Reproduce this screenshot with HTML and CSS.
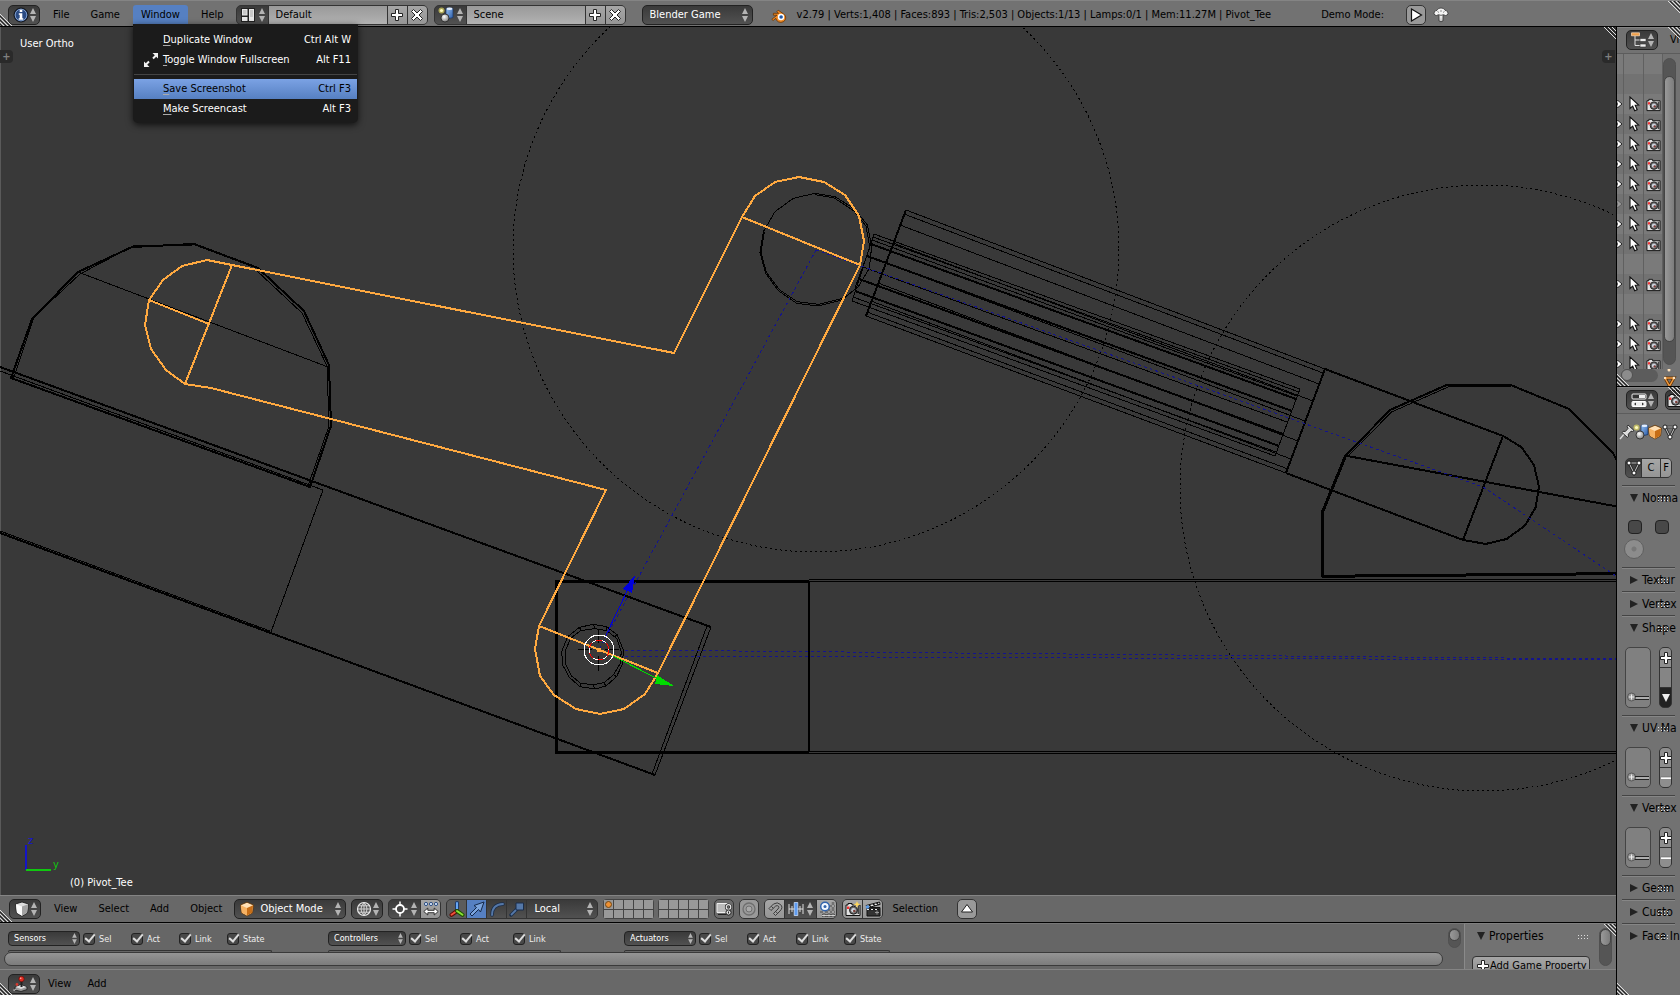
FILE: index.html
```html
<!DOCTYPE html>
<html lang="en">
<head>
<meta charset="utf-8">
<title>Blender</title>
<link rel="stylesheet" href="styles.css">
</head>
<body>
<svg class="defs" aria-hidden="true">
  <defs>
    <linearGradient id="gBlue" x1="0" y1="0" x2="1" y2="1"><stop offset="0" stop-color="#9cc4f4"/><stop offset="1" stop-color="#2a5ca8"/></linearGradient>
    <radialGradient id="gBall" cx=".4" cy=".35" r=".7"><stop offset="0" stop-color="#fff"/><stop offset="1" stop-color="#777"/></radialGradient>
    <linearGradient id="gWhite" x1="0" y1="0" x2="0" y2="1"><stop offset="0" stop-color="#fff"/><stop offset="1" stop-color="#bbb"/></linearGradient>
    <symbol id="arrows" viewBox="0 0 6 14"><path d="M3 0 6 6H0zM3 14 6 8H0z" fill="#b4b4b4"/></symbol>
    <symbol id="info" viewBox="0 0 16 16"><circle cx="8" cy="8" r="7" fill="#2b4b83" stroke="#111"/><circle cx="8" cy="8" r="5.8" fill="none" stroke="#7f9cc9"/><path d="M6.7 2.7h2.6v2.2H6.7zM5.8 6.2h3.5v5h1v1.6H5.7v-1.6h1V7.8h-.9z" fill="#fff"/></symbol>
    <symbol id="layout" viewBox="0 0 16 16"><path d="M1 1h14v14H1z" fill="#222"/><path d="M2 2h5.5v6.500H2zM2 10h5.500v4H2zM9 2h5v12H9z" fill="#e8e8e8"/><path d="M3 3h3.500v4.500H3zM10 3h3v7h-3z" fill="#c8c8c8"/></symbol>
    <symbol id="scene" viewBox="0 0 16 16"><path d="M8 1.500Q11.500 0 15 1.500v9q-3.500 1.800-7 0z" fill="url(#gBlue)" stroke="#183461" stroke-width=".7"/><ellipse cx="11.500" cy="1.800" rx="3" ry="1.200" fill="#e4efff"/><circle cx="7" cy="11" r="4" fill="url(#gBall)" stroke="#222" stroke-width=".8"/><circle cx="3.500" cy="3.500" r="3" fill="#e7df62" opacity=".65"/><circle cx="3.500" cy="3.500" r="1.600" fill="#fffbc0"/></symbol>
    <symbol id="plus" viewBox="0 0 14 14"><path d="M5.500 1.500h3v4h4v3h-4v4h-3v-4h-4v-3h4z" fill="#fff" stroke="#222"/></symbol>
    <symbol id="minus" viewBox="0 0 14 14"><path d="M1.500 6h11v2.500h-11z" fill="#fff" stroke="#666" stroke-width=".6"/></symbol>
    <symbol id="cross" viewBox="0 0 14 14"><path d="M3.500 1.500 7 5l3.500-3.500 2 2L9 7l3.500 3.500-2 2L7 9l-3.500 3.500-2-2L5 7 1.500 3.500z" fill="#fff" stroke="#222"/></symbol>
    <symbol id="blender" viewBox="0 0 16 16"><path d="M.8 12.300 6 8.200H2.400V6.300h5.200L5.800 4.700 7.200 3.200l5.600 3.900a5 4.600 0 1 1-8 4.200l-2.700 2.200z" fill="#f08a24" stroke="#6b3300" stroke-width=".8"/><circle cx="10" cy="10" r="3.200" fill="#fff"/><circle cx="10.100" cy="10" r="1.800" fill="#2358a5"/></symbol>
    <symbol id="play" viewBox="0 0 14 14"><path d="M2.500 1 12.500 7 2.500 13z" fill="#fff" stroke="#111" stroke-width="1.200"/></symbol>
    <symbol id="bomb" viewBox="0 0 16 16"><path d="M6 7.500h4V14q-2 1.500-4 0z" fill="url(#gWhite)" stroke="#333" stroke-width=".8"/><path d="M1 6.500Q.8 3.500 4 3.300 5 .8 8 1q3-.2 4 2.300 3.200.2 3 3.200-.2 2-2.500 2l-2-.8q-2.500 1.300-5 0l-2 .8Q1.200 8.500 1 6.500z" fill="#f4f4f4" stroke="#333" stroke-width=".8"/><path d="M4.500 4.500l1.500 1M8 3v2M11.500 4.500l-1.500 1" stroke="#888"/></symbol>
    <symbol id="fullscreen" viewBox="0 0 16 16"><path d="M9.500 1H15v5.500l-1.800-1.800-2.500 2.500-1.400-1.400 2.500-2.500zM6.500 15H1V9.500l1.800 1.800 2.500-2.500 1.400 1.400-2.500 2.500z" fill="#f2f2f2"/></symbol>
    <symbol id="cubeWhite" viewBox="0 0 16 16"><path d="M8 1 14.500 3 13.500 12 8 15.300 2.500 12 1.500 3z" fill="#ddd" stroke="#111" stroke-width=".8"/><path d="M1.900 3.300 8 5.500V14.800L2.900 11.800z" fill="#fafafa"/><path d="M14.100 3.300 8 5.500V14.800L13.100 11.800z" fill="#a2a2a2"/></symbol>
    <symbol id="cubeOrange" viewBox="0 0 16 16"><path d="M8 1.200 14.500 4 13.500 12 8 15 2.500 12 1.500 4z" fill="#ffe0b5" stroke="#5c2e00" stroke-width=".8"/><path d="M1.900 4.300 8 7V14.500L2.800 11.800z" fill="#f6b263"/><path d="M14.100 4.300 8 7V14.500L13.200 11.800z" fill="#c66d16"/></symbol>
    <symbol id="globe" viewBox="0 0 16 16"><circle cx="8" cy="8" r="6.500" fill="#555" stroke="#eee" stroke-width="1.200"/><path d="M8 1.500v13M1.500 8h13M8 1.500Q2 8 8 14.500Q14 8 8 1.500M2.800 4.800h10.400M2.800 11.200h10.400" fill="none" stroke="#ddd" stroke-width=".9"/></symbol>
    <symbol id="pivot" viewBox="0 0 16 16"><circle cx="8" cy="8" r="4" fill="none" stroke="#fff" stroke-width="1.800"/><path d="M8 .5v4M8 11.500v4M.5 8h4M11.500 8h4" stroke="#fff" stroke-width="1.500"/></symbol>
    <symbol id="centers" viewBox="0 0 16 16"><g fill="#d6e6ff" stroke="#23467c" stroke-width=".9"><circle cx="3" cy="3" r="1.600"/><circle cx="8" cy="3" r="1.600"/><circle cx="13" cy="3" r="1.600"/></g><path d="M.8 10.500 4.800 7v2.300h6.400V7l4 3.500-4 3.500v-2.300H4.800V14z" fill="#fff" stroke="#222" stroke-width=".9"/></symbol>
    <symbol id="axes" viewBox="0 0 16 16"><path d="M8 9.500V2" stroke="#1c3d70" stroke-width="4" stroke-linecap="round"/><path d="M8 9.500V2" stroke="#67a6f5" stroke-width="2" stroke-linecap="round"/><path d="M8 10 2.500 13.800" stroke="#5e0b05" stroke-width="4" stroke-linecap="round"/><path d="M8 10 2.500 13.800" stroke="#f0523c" stroke-width="2" stroke-linecap="round"/><path d="M8 10l5.500 3.800" stroke="#1f5200" stroke-width="4" stroke-linecap="round"/><path d="M8 10l5.500 3.800" stroke="#8ae234" stroke-width="2" stroke-linecap="round"/></symbol>
    <symbol id="translate" viewBox="0 0 16 16"><path d="M1 13 7.500 6.500 5 4.500 15 1 11.500 11 9.500 8.500 3 15z" fill="#7ba4dd" stroke="#14284a"/></symbol>
    <symbol id="rotate" viewBox="0 0 16 16"><path d="M3 14Q3 3.500 14 3" fill="none" stroke="#1a2d4a" stroke-width="3.400" stroke-linecap="round"/><path d="M3 14Q3 3.500 14 3" fill="none" stroke="#5578a8" stroke-width="1.800" stroke-linecap="round"/></symbol>
    <symbol id="scale" viewBox="0 0 16 16"><path d="M2 14 8 8" stroke="#1a2d4a" stroke-width="3.400" stroke-linecap="round"/><path d="M2 14 8 8" stroke="#5578a8" stroke-width="1.800"/><path d="M7 2h7.500v7H7z" fill="#5578a8" stroke="#1a2d4a"/></symbol>
    <symbol id="lock" viewBox="0 0 16 16"><path d="M1 2.500h10v9H1z" fill="#bbb" stroke="#eee"/><path d="M2 13.500h9" stroke="#222"/><circle cx="12.500" cy="6" r="2.300" fill="none" stroke="#222" stroke-width="2.600"/><circle cx="12.500" cy="6" r="2.300" fill="none" stroke="#e8e8e8" stroke-width="1.200"/><circle cx="12.500" cy="11.500" r="2.600" fill="#ddd" stroke="#222"/><path d="M12.500 10.500v2" stroke="#222"/></symbol>
    <symbol id="propedit" viewBox="0 0 16 16"><circle cx="8" cy="8" r="6" fill="none" stroke="#6f6f6f" stroke-width="1.300"/><circle cx="8" cy="8" r="3" fill="#a9a9a9" stroke="#6f6f6f"/></symbol>
    <symbol id="magnet" viewBox="0 0 16 16"><path d="M2 7.500 6.500 3Q10.500.5 13.500 3.500T13 10l-4.500 4.500-2-2L11 8q1.500-1.800.5-2.800T8.700 5L4 9.500z" fill="#a2a2a2" stroke="#3c3c3c"/><path d="M4.300 5.300l2 2M10.500 12.300l-2-2" stroke="#3c3c3c"/></symbol>
    <symbol id="increment" viewBox="0 0 16 16"><path d="M1 3v10M15 3v10M4 5v6M12 5v6M1 8h14" stroke="#ddd"/><path d="M6.200 1.500h3.600v13H6.200z" fill="#5f9cf0" stroke="#d8e8ff" stroke-width=".7"/></symbol>
    <symbol id="snapgrid" viewBox="0 0 16 16"><path d="M5 9v7M10 8v8M14 1v15M9 5h7M1 11h15M3 14.500h13" stroke="#1b1b1b" stroke-width="2.200"/><path d="M5 9v7M10 8v8M14 1v15M9 5h7M1 11h15M3 14.500h13" stroke="#ddd" stroke-width=".9"/><circle cx="6" cy="5.500" r="4.300" fill="#f2f7ff" stroke="#3264ad" stroke-width="1.500"/><circle cx="6" cy="5.500" r="1.500" fill="#3264ad"/></symbol>
    <symbol id="camera" viewBox="0 0 16 16"><path d="M1 4h2V2.500h4V4h8v10.500H1z" fill="#e2e2e2" stroke="#111"/><path d="M2 5.500h2.500V8H2z" fill="#e33"/><path d="M12.500 5h1.800v8h-1.800z" fill="#444"/><circle cx="8.500" cy="9.200" r="4" fill="#666" stroke="#222"/><circle cx="8.500" cy="9.200" r="2.300" fill="#cfd5df"/><circle cx="9.300" cy="10" r="1.300" fill="#7c3f39"/></symbol>
    <symbol id="renderStill" viewBox="0 0 16 16"><use href="#camera"/><path d="M12 0l1 2.500 2.800.8-2.800 1L12 7l-1-2.700-2.800-1L11 2.500z" fill="#ffd75c"/></symbol>
    <symbol id="clapper" viewBox="0 0 16 16"><path d="M2 6.500h13V15H2z" fill="#333" stroke="#111"/><path d="M1.200 4.500 14.500 1l.6 2.400L2 7z" fill="#eee" stroke="#111"/><path d="M4 4l2 1.800M8 2.900l2 1.800M11.500 2l2 1.700M3 8.500h11" stroke="#111" stroke-width="1.400"/><path d="M2 8.500h2M6 8.500h2M10 8.500h2" stroke="#eee"/><path d="M10 11.500h4M12 9.500v4" stroke="#999"/><circle cx="2.500" cy="6" r="1.800" fill="#5a9be8"/></symbol>
    <symbol id="upTri" viewBox="0 0 14 14"><path d="M7 2.500 12.500 10H1.500z" fill="#fff" stroke="#222"/></symbol>
    <symbol id="joystick" viewBox="0 0 16 16"><path d="M2 11 8 8.500l6 2.500v2.500L8 15.500 2 14z" fill="#999" stroke="#1a1a1a" stroke-width=".8"/><path d="M2.500 11 8 9l5.500 2L8 13z" fill="#ddd"/><path d="M8.500 4v7" stroke="#222" stroke-width="2"/><circle cx="8.500" cy="3" r="2.700" fill="#e02c22" stroke="#5d0703" stroke-width=".6"/><circle cx="7.700" cy="2.300" r=".8" fill="#ffb4ac"/><circle cx="4" cy="8.500" r="1.400" fill="#d43a30"/><path d="M2.500 13Q1 15.500.5 14" fill="none" stroke="#eee"/></symbol>
    <symbol id="tree" viewBox="0 0 16 16"><path d="M4 4v9.500h5M4 8h5" fill="none" stroke="#ddd"/><path d="M.5.800h8v3h-8z" fill="#f0a04a" stroke="#fbe0c0" stroke-width=".7"/><path d="M9 6.500h6v3H9zM9 12h6v3H9z" fill="#eee" stroke="#333" stroke-width=".6"/></symbol>
    <symbol id="props" viewBox="0 0 16 16"><rect x="1" y="2" width="14" height="5" rx="1" fill="#333" stroke="#eee"/><path d="M8 3h6v3H8z" fill="#eee"/><rect x="1" y="9.500" width="14" height="5" rx="1" fill="#eee" stroke="#fff"/><path d="M5 10.500 3 12l2 1.500zM11 10.500l2 1.500-2 1.500z" fill="#333"/></symbol>
    <symbol id="pin" viewBox="0 0 16 16"><path d="M1 15 6 9" stroke="#ddd" stroke-width="1.400"/><path d="M9 1l6 5.500-1.500 1-1.500-.3-2.700 3 .2 2.300-1.200.8L3 8.500l1-1.200 2.300.2 2.700-3L8.200 2.500z" fill="#ddd" stroke="#222" stroke-width=".9"/></symbol>
    <symbol id="mesh" viewBox="0 0 16 16"><path d="M3 3h10L8 13z" fill="none" stroke="#222" stroke-width="2.600"/><path d="M3 3h10L8 13z" fill="none" stroke="#ccc"/><g fill="#fff" stroke="#111" stroke-width=".9"><circle cx="3" cy="3" r="2"/><circle cx="13" cy="3" r="2"/><circle cx="8" cy="13" r="2"/></g></symbol>
    <symbol id="cursor" viewBox="0 0 12 16"><path d="M2 1v11.500l2.700-2.300 2 4.600 2.500-1.100-2-4.400 3.500-.3z" fill="#fff" stroke="#111" stroke-width="1.100"/></symbol>
    <symbol id="eye" viewBox="0 0 6 10"><path d="M-3 1Q2 1 5 5 2 9-3 9z" fill="#fff" stroke="#222"/><path d="M0 3.500v3" stroke="#222" stroke-width="1.500"/></symbol>
    <symbol id="hatchR" viewBox="0 0 12 12"><path d="M0 0l12 12M4 0l8 8M8 0l4 4" stroke="#ddd"/><path d="M2 0l10 10M6 0l6 6M10 0l2 2" stroke="#222"/></symbol>
    <symbol id="hatchL" viewBox="0 0 12 12"><path d="M0 0l12 12M0 4l8 8M0 8l4 4" stroke="#ddd"/><path d="M0 2l10 10M0 6l6 6M0 10l2 2" stroke="#222"/></symbol>
    <symbol id="dots" viewBox="0 0 10 6"><path d="M0 1.500h10M0 4.500h10" stroke="#ddd" stroke-dasharray="1 2"/></symbol>
    <symbol id="filter" viewBox="0 0 26 12"><circle cx="4.500" cy="5" r="4" fill="#999" stroke="#555"/><path d="M2 5h5M4.500 2.500v5" stroke="#eee"/><path d="M8 4.500h14M8 7.500h14" stroke="#222"/><path d="M9 6h13" stroke="#ddd"/></symbol>
    <symbol id="triDown" viewBox="0 0 8 8"><path d="M0 0h8L4 8z" fill="#222"/></symbol>
    <symbol id="triRight" viewBox="0 0 8 8"><path d="M0 0 8 4 0 8z" fill="#222"/></symbol>
  </defs>
</svg>

<header class="bar bar-top">
  <svg class="hatch bl"><use href="#hatchL"/></svg>
  <button class="editor" aria-label="Editor type: Info"><svg class="ic"><use href="#info"/></svg><svg class="ar"><use href="#arrows"/></svg></button>
  <nav class="menus">
    <button class="menu">File</button>
    <button class="menu">Game</button>
    <div class="menu-wrap">
      <button class="menu open" aria-expanded="true">Window</button>
      <div class="popup" role="menu">
        <button class="item" role="menuitem"><span class="slot"></span><span class="lbl"><u>D</u>uplicate Window</span><span>Ctrl Alt W</span></button>
        <button class="item" role="menuitem"><span class="slot"><svg class="ic"><use href="#fullscreen"/></svg></span><span class="lbl"><u>T</u>oggle Window Fullscreen</span><span>Alt F11</span></button>
        <hr>
        <button class="item active-item" role="menuitem"><span class="slot"></span><span class="lbl"><u>S</u>ave Screenshot</span><span>Ctrl F3</span></button>
        <button class="item" role="menuitem"><span class="slot"></span><span class="lbl"><u>M</u>ake Screencast</span><span>Alt F3</span></button>
      </div>
    </div>
    <button class="menu">Help</button>
  </nav>
  <div class="group idblock">
    <button class="seg dark wide" aria-label="Browse screen layout"><svg class="ic"><use href="#layout"/></svg><svg class="ar"><use href="#arrows"/></svg></button>
    <input class="field" type="text" value="Default" aria-label="Screen layout">
    <button class="seg" aria-label="Add layout"><svg class="ic14"><use href="#plus"/></svg></button>
    <button class="seg" aria-label="Delete layout"><svg class="ic14"><use href="#cross"/></svg></button>
  </div>
  <div class="group idblock">
    <button class="seg dark wide" aria-label="Browse scene"><svg class="ic"><use href="#scene"/></svg><svg class="ar"><use href="#arrows"/></svg></button>
    <input class="field" type="text" value="Scene" aria-label="Scene">
    <button class="seg" aria-label="Add scene"><svg class="ic14"><use href="#plus"/></svg></button>
    <button class="seg" aria-label="Delete scene"><svg class="ic14"><use href="#cross"/></svg></button>
  </div>
  <div class="drop engine"><select aria-label="Render engine"><option>Blender Game</option></select><svg class="ar"><use href="#arrows"/></svg></div>
  <svg class="ic logo"><use href="#blender"/></svg>
  <p class="stats">v2.79 | Verts:1,408 | Faces:893 | Tris:2,503 | Objects:1/13 | Lamps:0/1 | Mem:11.27M | Pivot_Tee</p>
  <p class="demo">Demo Mode:</p>
  <button class="sq" aria-label="Play"><svg class="ic14"><use href="#play"/></svg></button>
  <svg class="ic bomb"><use href="#bomb"/></svg>
  <svg class="hatch tr"><use href="#hatchR"/></svg>
</header>

<div class="work">
  <main class="left">
    <section class="view3d">
      <svg class="scene" viewBox="0 27 1616 868" preserveAspectRatio="xMinYMin slice" aria-label="Wireframe view">
        <g class="wire dotted">
          <circle cx="816" cy="249" r="303"/><circle cx="1483" cy="488" r="303"/>
        </g>
        <g class="wire">
          <path class="w2" d="M11 378 32 319 78 272 132 247 194 244 258 268 304 311 329 365 331 426 310 487z"/>
          <path d="M13 380 34 317 80 274 133 246 193 245 M256 270 302 313 327 366 329 426 308 486"/>
          <path d="M78 272 328 367"/>
          <path class="w2" d="M0 367 711 627M0 533 655 775"/>
          <path d="M0 371 323 490 271 632M711 627 655 775M707 626 652 774M0 531 270 631"/>
          <path class="w3" d="M809 581H556V752H809"/><path class="w2" d="M809 581V752"/>
          <path d="M809 579.500H1616M809 581.500H1616M809 751.500H1616M809 753.500H1616"/>
        </g>
        <g class="wire">
          <path class="w2" d="M906 210 866 316M1325 369 1286 473"/>
          <path d="M906 210 1325 369M904 214 1323 373M900 225 1319 384M893 243 1313 401M886 263 1305 421M878 283 1298 441M871 301 1291 459M867 312 1288 469M866 316 1286 473"/>
          <path d="M874 234 852 301M1300 389 1275 456M870 247 855 288M874 234 1300 389M873 237 1299 392M852 301 1275 456M853 297 1276 452M872 240 1297 396"/>
          <path class="w2" d="M871 244 1296 399M867 256 1292 411M859 279 1283 434M855 291 1279 446"/>
          <path d="M863 267 1287 422"/>
          <path class="w2" d="M1325 369 1503 436M1286 473 1463 540M1503 436 1463 540"/>
        </g>
        <g class="wire" transform="translate(1240 350) scale(.3333)">
          <path class="w2" d="M788 257 845 292 882 345 897 410 887 472 855 527 800 567 737 582 670 570"/>
          <path class="w3" d="M248 680V485L317 317"/>
          <path class="w2" d="M317 317 450 180 620 105H812L985 176"/>
          <path d="M322 320 455 186 624 111H812"/>
          <path class="w2" d="M985 176 1120 310 1132 335M317 317 1128 469"/>
          <path class="w3" d="M247 679 1128 671"/>
        </g>
        <g class="wire" transform="translate(720 160) scale(.3333)">
          <path d="M285 100 345 110 405 148 442 195 455 260 448 325 415 380 365 420 295 438 230 430 175 392 137 340 120 278 130 215 165 155 220 115z"/>
          <path d="M285 104 343 114 402 153 438 198 449 260M365 416 295 433 232 425 178 389 139 337 123 278 133 215"/>
        </g>
        <g class="wire" transform="translate(500 560) scale(.3333)">
          <path d="M280 193 320 200 352 225 370 270 368 310 350 350 318 378 285 387 240 380 208 352 188 315 185 275 203 230 238 202zM285 206 320 212 350 235 364 275 360 312 340 345 312 368 280 374 242 370 215 348 197 312 195 275 212 235 242 212zM238 202l6 10M280 193l5 13M320 200v12M352 225l-10 6M203 230l10 6M318 378l-6-10M350 350l-10-6M285 387l-5-12M240 380l4-10"/>
        </g>
        <g class="rel">
          <path d="M816 250 599 650M816 250 1483 487 1616 576M625 650 1616 659M625 656 1616 660"/>
        </g>
        <g class="active">
          <path d="M185 384 166 370 151 349 145 325 149 300 163 280 182 266 207 260 232 265 674 353 742 217 755 196 775 182 799 177 824 182 845 195 859 216 864 241 860 265 658 673 645 694 624 709 600 714 576 709 554 695 540 676 535 649 539 626 606 490 211 388z"/>
          <path d="M149 300 209 324M232 265 185 384M742 217 860 265M539 626 658 673"/>
        </g>
        <path class="zaxis" d="M606 635 630 585"/><path class="zhead" d="M635 575 623 589 632 593z"/>
        <path class="yaxis" d="M613 656 658 679"/><path class="yhead" d="M674 686 657 675 655 684z"/>
        <path class="wire cross" d="M578 649.500h14M605 649.500h14M598.500 629v14M598.500 656v15"/>
        <circle class="cur-w" cx="599" cy="650" r="15"/><circle class="cur-w" cx="599" cy="650" r="10"/><circle class="cur-r" cx="599" cy="650" r="10"/><circle cx="599" cy="650" r="2.500" fill="#ffa940"/>
        <path d="M26 870V845" stroke="#1414c8" stroke-width="2"/><path d="M26 870h25" stroke="#0fc80f" stroke-width="2"/>
        <text x="28" y="844" fill="#1414d2">z</text><text x="53" y="868" fill="#0fc80f">y</text>
        <text x="70" y="886" fill="#fff">(0) Pivot_Tee</text>
      </svg>
      <p class="overlay">User Ortho</p>
      <button class="tab tab-l" aria-label="Show tools">+</button>
      <button class="tab tab-r" aria-label="Show properties">+</button>
      <svg class="hatch tr"><use href="#hatchR"/></svg>
    </section>

    <div class="bar bar-view">
      <svg class="hatch bl"><use href="#hatchL"/></svg>
      <button class="editor" aria-label="Editor type: 3D View"><svg class="ic"><use href="#cubeWhite"/></svg><svg class="ar"><use href="#arrows"/></svg></button>
      <nav class="menus">
        <button class="menu">View</button><button class="menu">Select</button><button class="menu">Add</button><button class="menu">Object</button>
      </nav>
      <div class="drop mode"><svg class="ic"><use href="#cubeOrange"/></svg><select aria-label="Mode"><option>Object Mode</option></select><svg class="ar"><use href="#arrows"/></svg></div>
      <button class="editor near" aria-label="Viewport shading"><svg class="ic"><use href="#globe"/></svg><svg class="ar"><use href="#arrows"/></svg></button>
      <div class="group">
        <button class="seg dark wide" aria-label="Pivot point"><svg class="ic"><use href="#pivot"/></svg><svg class="ar"><use href="#arrows"/></svg></button>
        <button class="seg" aria-label="Manipulate centers"><svg class="ic"><use href="#centers"/></svg></button>
      </div>
      <div class="group">
        <button class="seg mid" aria-label="Manipulator"><svg class="ic"><use href="#axes"/></svg></button>
        <button class="seg blue" aria-label="Translate"><svg class="ic"><use href="#translate"/></svg></button>
        <button class="seg dark" aria-label="Rotate"><svg class="ic"><use href="#rotate"/></svg></button>
        <button class="seg dark" aria-label="Scale"><svg class="ic"><use href="#scale"/></svg></button>
        <div class="drop orient"><select aria-label="Orientation"><option>Local</option></select><svg class="ar"><use href="#arrows"/></svg></div>
      </div>
      <div class="layers">
        <button aria-label="Layer 1"><i class="dot"></i></button><button aria-label="Layer 2"></button><button aria-label="Layer 3"></button><button aria-label="Layer 4"></button><button aria-label="Layer 5"></button>
        <button aria-label="Layer 11"></button><button aria-label="Layer 12"></button><button aria-label="Layer 13"></button><button aria-label="Layer 14"></button><button aria-label="Layer 15"></button>
      </div>
      <div class="layers">
        <button aria-label="Layer 6"></button><button aria-label="Layer 7"></button><button aria-label="Layer 8"></button><button aria-label="Layer 9"></button><button aria-label="Layer 10"></button>
        <button aria-label="Layer 16"></button><button aria-label="Layer 17"></button><button aria-label="Layer 18"></button><button aria-label="Layer 19"></button><button aria-label="Layer 20"></button>
      </div>
      <button class="sq pressed" aria-label="Lock to scene"><svg class="ic"><use href="#lock"/></svg></button>
      <button class="sq" aria-label="Proportional editing"><svg class="ic"><use href="#propedit"/></svg></button>
      <div class="group">
        <button class="seg" aria-label="Snap"><svg class="ic"><use href="#magnet"/></svg></button>
        <button class="seg dark wide" aria-label="Snap element"><svg class="ic"><use href="#increment"/></svg><svg class="ar"><use href="#arrows"/></svg></button>
        <button class="seg" aria-label="Absolute grid snap"><svg class="ic"><use href="#snapgrid"/></svg></button>
      </div>
      <div class="group">
        <button class="seg" aria-label="OpenGL render"><svg class="ic"><use href="#renderStill"/></svg></button>
        <button class="seg" aria-label="OpenGL render animation"><svg class="ic"><use href="#clapper"/></svg></button>
      </div>
      <p class="selection">Selection</p>
      <button class="sq" aria-label="Up"><svg class="ic14"><use href="#upTri"/></svg></button>
    </div>

    <section class="logic">
      <div class="bricks">
        <div class="brick-cols">
          <div class="bcol bc-sensors">
            <div class="brow"><div class="drop small"><select aria-label="Sensors"><option>Sensors</option></select><svg class="ar"><use href="#arrows"/></svg></div>
            <label><input type="checkbox" checked>Sel</label><label class="c2"><input type="checkbox" checked>Act</label><label class="c3"><input type="checkbox" checked>Link</label><label><input type="checkbox" checked>State</label></div>
            <div class="stub"></div>
          </div>
          <div class="bcol bc-controllers">
            <div class="brow"><div class="drop small"><select aria-label="Controllers"><option>Controllers</option></select><svg class="ar"><use href="#arrows"/></svg></div>
            <label><input type="checkbox" checked>Sel</label><label class="c2"><input type="checkbox" checked>Act</label><label><input type="checkbox" checked>Link</label></div>
            <div class="stub"></div>
          </div>
          <div class="bcol bc-actuators">
            <div class="brow"><div class="drop small"><select aria-label="Actuators"><option>Actuators</option></select><svg class="ar"><use href="#arrows"/></svg></div>
            <label><input type="checkbox" checked>Sel</label><label class="c2"><input type="checkbox" checked>Act</label><label class="c3"><input type="checkbox" checked>Link</label><label><input type="checkbox" checked>State</label></div>
            <div class="stub"></div>
          </div>
          <div class="vscroll mini"><i></i></div>
        </div>
        <div class="hscroll"></div>
      </div>
      <div class="gameprops">
        <div class="gp-main">
          <h2 class="phead"><svg class="tri"><use href="#triDown"/></svg>Properties<svg class="dots"><use href="#dots"/></svg></h2>
          <button class="addprop"><svg class="ic14"><use href="#plus"/></svg>Add Game Property</button>
        </div>
        <div class="vscroll gp"><i></i></div>
        <svg class="hatch tr"><use href="#hatchR"/></svg>
      </div>
    </section>

    <footer class="bar bar-logic">
      <svg class="hatch bl"><use href="#hatchL"/></svg>
      <button class="editor" aria-label="Editor type: Logic"><svg class="ic"><use href="#joystick"/></svg><svg class="ar"><use href="#arrows"/></svg></button>
      <nav class="menus"><button class="menu">View</button><button class="menu">Add</button></nav>
    </footer>
  </main>

  <aside class="right">
    <section class="outliner">
      <svg class="hatch tr"><use href="#hatchR"/></svg>
      <div class="bar bar-side"><button class="editor" aria-label="Editor type: Outliner"><svg class="ic"><use href="#tree"/></svg><svg class="ar"><use href="#arrows"/></svg></button><button class="menu">Vi</button></div>
      <div class="out-body">
        <div class="rows">
          <div class="row"><i></i><i></i><i></i></div>
          <div class="row"><i></i><i></i><i></i></div>
          <div class="row"><i><svg class="eye"><use href="#eye"/></svg></i><i><svg class="ptr"><use href="#cursor"/></svg></i><i><svg class="cam"><use href="#camera"/></svg></i></div>
          <div class="row"><i><svg class="eye"><use href="#eye"/></svg></i><i><svg class="ptr"><use href="#cursor"/></svg></i><i><svg class="cam"><use href="#camera"/></svg></i></div>
          <div class="row"><i><svg class="eye"><use href="#eye"/></svg></i><i><svg class="ptr"><use href="#cursor"/></svg></i><i><svg class="cam"><use href="#camera"/></svg></i></div>
          <div class="row"><i><svg class="eye"><use href="#eye"/></svg></i><i><svg class="ptr"><use href="#cursor"/></svg></i><i><svg class="cam"><use href="#camera"/></svg></i></div>
          <div class="row"><i><svg class="eye"><use href="#eye"/></svg></i><i><svg class="ptr"><use href="#cursor"/></svg></i><i><svg class="cam"><use href="#camera"/></svg></i></div>
          <div class="row"><i><svg class="eye off"><use href="#eye"/></svg></i><i><svg class="ptr"><use href="#cursor"/></svg></i><i><svg class="cam"><use href="#camera"/></svg></i></div>
          <div class="row"><i><svg class="eye"><use href="#eye"/></svg></i><i><svg class="ptr"><use href="#cursor"/></svg></i><i><svg class="cam"><use href="#camera"/></svg></i></div>
          <div class="row"><i><svg class="eye"><use href="#eye"/></svg></i><i><svg class="ptr"><use href="#cursor"/></svg></i><i><svg class="cam"><use href="#camera"/></svg></i></div>
          <div class="row"><i></i><i></i><i></i></div>
          <div class="row"><i><svg class="eye"><use href="#eye"/></svg></i><i><svg class="ptr"><use href="#cursor"/></svg></i><i><svg class="cam"><use href="#camera"/></svg></i></div>
          <div class="row"><i></i><i></i><i></i></div>
          <div class="row"><i><svg class="eye"><use href="#eye"/></svg></i><i><svg class="ptr"><use href="#cursor"/></svg></i><i><svg class="cam"><use href="#camera"/></svg></i></div>
          <div class="row"><i><svg class="eye"><use href="#eye"/></svg></i><i><svg class="ptr"><use href="#cursor"/></svg></i><i><svg class="cam"><use href="#camera"/></svg></i></div>
          <div class="row"><i><svg class="eye"><use href="#eye"/></svg></i><i><svg class="ptr"><use href="#cursor"/></svg></i><i><svg class="cam"><use href="#camera"/></svg></i></div>
        </div>
        <div class="vscroll out"><i></i></div>
      </div>
      <div class="out-foot"><div class="hmini"><i></i></div><svg class="meshbit" viewBox="0 0 14 17"><circle cx="5" cy="1" r="1.500" fill="#ffe2bc"/><path d="M1 9h9l-4.500 8z" fill="none" stroke="#5c2e00" stroke-width="3"/><path d="M1 9h9l-4.500 8z" fill="none" stroke="#f09a40" stroke-width="1.500"/><circle cx="1" cy="9" r="1.300" fill="#ffe2bc"/><circle cx="10" cy="9" r="1.300" fill="#ffe2bc"/></svg></div>
      <svg class="hatch bl"><use href="#hatchL"/></svg>
    </section>

    <section class="properties">
      <svg class="hatch tr"><use href="#hatchR"/></svg>
      <svg class="hatch bl"><use href="#hatchL"/></svg>
      <div class="bar bar-side"><button class="editor" aria-label="Editor type: Properties"><svg class="ic"><use href="#props"/></svg><svg class="ar"><use href="#arrows"/></svg></button><button class="seg dark ctx" aria-label="Render context"><svg class="ic"><use href="#camera"/></svg></button></div>
      <div class="crumbs"><svg class="ic"><use href="#pin"/></svg><svg class="ic"><use href="#scene"/></svg><svg class="ic"><use href="#cubeOrange"/></svg><svg class="ic"><use href="#mesh"/></svg></div>
      <div class="group datablock"><button class="seg dark" aria-label="Browse mesh data"><svg class="ic"><use href="#mesh"/></svg></button><button class="seg">C</button><button class="seg">F</button></div>
      <div class="panel">
        <h3 class="phead"><svg class="tri"><use href="#triDown"/></svg>Norma<svg class="dots"><use href="#dots"/></svg></h3>
        <div class="normals"><input type="checkbox" aria-label="Auto smooth"><input type="checkbox" aria-label="Double sided"><button class="round" aria-label="Angle"></button></div>
      </div>
      <div class="panel"><h3 class="phead"><svg class="tri"><use href="#triRight"/></svg>Textur<svg class="dots"><use href="#dots"/></svg></h3></div>
      <div class="panel"><h3 class="phead"><svg class="tri"><use href="#triRight"/></svg>Vertex<svg class="dots"><use href="#dots"/></svg></h3></div>
      <div class="panel">
        <h3 class="phead"><svg class="tri"><use href="#triDown"/></svg>Shape<svg class="dots"><use href="#dots"/></svg></h3>
        <div class="list"><div class="box"><svg class="filt"><use href="#filter"/></svg></div><div class="stack"><button aria-label="Add shape key"><svg class="ic14"><use href="#plus"/></svg></button><button class="dim" aria-label="Remove shape key"></button><button class="dk" aria-label="Shape key specials"><svg class="tri" viewBox="0 0 8 8"><path d="M0 0h8L4 8z" fill="#eee"/></svg></button></div></div>
      </div>
      <div class="panel">
        <h3 class="phead"><svg class="tri"><use href="#triDown"/></svg>UV Ma<svg class="dots"><use href="#dots"/></svg></h3>
        <div class="list"><div class="box"><svg class="filt"><use href="#filter"/></svg></div><div class="stack"><button aria-label="Add UV map"><svg class="ic14"><use href="#plus"/></svg></button><button aria-label="Remove UV map"><svg class="ic14"><use href="#minus"/></svg></button></div></div>
      </div>
      <div class="panel">
        <h3 class="phead"><svg class="tri"><use href="#triDown"/></svg>Vertex<svg class="dots"><use href="#dots"/></svg></h3>
        <div class="list"><div class="box"><svg class="filt"><use href="#filter"/></svg></div><div class="stack"><button aria-label="Add vertex color"><svg class="ic14"><use href="#plus"/></svg></button><button aria-label="Remove vertex color"><svg class="ic14"><use href="#minus"/></svg></button></div></div>
      </div>
      <div class="panel"><h3 class="phead"><svg class="tri"><use href="#triRight"/></svg>Geom<svg class="dots"><use href="#dots"/></svg></h3></div>
      <div class="panel"><h3 class="phead"><svg class="tri"><use href="#triRight"/></svg>Custo<svg class="dots"><use href="#dots"/></svg></h3></div>
      <div class="panel"><h3 class="phead"><svg class="tri"><use href="#triRight"/></svg>Face In<svg class="dots"><use href="#dots"/></svg></h3></div>
    </section>
  </aside>
</div>
</body>
</html>
```
FILE: styles.css
```css
* { box-sizing: border-box; }
body {
  margin: 0;
  height: 100vh;
  display: flex;
  flex-direction: column;
  overflow: hidden;
  background: #393939;
  font-family: "DejaVu Sans Condensed", "DejaVu Sans", sans-serif;
  font-size: 11px;
  line-height: 14px;
  color: #000;
}
button, input, select {
  margin: 0;
  padding: 0;
  border: 0;
  background: none;
  color: inherit;
  font: inherit;
  appearance: none;
  border-radius: 0;
}
p, h2, h3 { margin: 0; font-size: inherit; font-weight: normal; white-space: nowrap; }
svg { display: block; flex: none; }
.defs { position: absolute; width: 0; height: 0; }
.ic { width: 16px; height: 16px; }
.ic14 { width: 14px; height: 14px; }
.ar { width: 6px; height: 14px; }
.hatch { position: absolute; width: 12px; height: 12px; z-index: 2; pointer-events: none; }
.hatch.bl { left: 0; bottom: 0; }
.hatch.tr { right: 0; top: 0; }

/* Header bars */
.bar { position: relative; display: flex; flex: none; background: #686868; padding: 3px 0 3px 8px; border-top: 1px solid #848484; }
.bar-top { background: #727272; padding: 4px 0 1px 8px; border-bottom: 1px solid #000; z-index: 5; }
.bar-view { border-bottom: 1px solid #000; padding-left: 9px; }
.bar-logic { padding-top: 4px; padding-bottom: 1px; }
.menus { display: flex; gap: 5px; margin: 0 4px 0 5px; }
.menu { height: 20px; padding: 0 8px; }
.bar-logic .menus { gap: 0; margin-left: 0; }
.menu.open { background: #5680c2; border-radius: 3px 3px 0 0; }
.menu-wrap { position: relative; }
.bar p { line-height: 20px; }

.editor, .drop {
  flex: none;
  height: 20px;
  display: flex;
  align-items: center;
  border: 1px solid #222;
  border-radius: 5px;
  background: linear-gradient(#3a3a3a, #515151);
  color: #fff;
}
.editor { width: 32px; justify-content: space-between; padding: 0 3px 0 4px; }
.drop { position: relative; }
.drop select { flex: 1; height: 18px; padding: 0 14px 0 7px; min-width: 0; }
.drop .ar { position: absolute; right: 4px; top: 2px; pointer-events: none; }
.drop option { color: #000; }
.engine { width: 111px; margin-left: 10px; }
.mode { width: 112px; padding-left: 4px; }
.mode select { padding-left: 5px; }

.group { display: flex; flex: none; height: 20px; border: 1px solid #333; border-radius: 5px; overflow: hidden; background: #333; gap: 1px; margin-left: 5px; }
.seg { width: 19px; display: flex; align-items: center; justify-content: center; background: linear-gradient(#a6a6a6, #959595); flex: none; }
.seg.wide { width: 31px; justify-content: space-between; padding: 0 3px; }
.seg.dark { background: linear-gradient(#3a3a3a, #515151); }
.seg.mid { background: #5c5c5c; }
.seg.blue { background: #5680c2; }
.idblock { margin-left: 0; margin-right: 6px; }
.field { width: 118px; padding: 0 7px; background: linear-gradient(#999, #b2b2b2); }
.orient { width: 70px; height: 18px; border: 0; border-radius: 0; }
.logo { margin: 2px 10px 0 18px; }
.demo { margin-left: 50px; margin-right: 22px; }
.bomb { margin: 2px 0 0 7px; }
.sq { flex: none; width: 20px; height: 20px; display: flex; align-items: center; justify-content: center; border: 1px solid #333; border-radius: 5px; background: #999; }
.near { margin-left: 5px; }
.bar-view .sq { margin-left: 5px; }
.sq.pressed { background: #6c6c6c; }
.layers { display: grid; grid-template-columns: repeat(5, 9px); grid-auto-rows: 1fr; gap: 1px; height: 20px; margin-left: 5px; padding: 1px; border-radius: 4px; overflow: hidden; background: #444; width: 51px; }
.layers + .layers { margin-left: 4px; }
.layers button { background: #999; }
.dot { display: block; width: 5px; height: 5px; margin: 0 2px; border-radius: 50%; background: #f09030; outline: 1px solid #804400; }
.bar-view .selection { margin: 0 14px 0 9px; }

/* Window menu */
.popup {
  position: absolute;
  left: 0;
  top: 19px;
  width: 225px;
  padding: 6px 1px 4px;
  background: #1b1b1b;
  color: #fff;
  border-radius: 0 0 5px 5px;
  box-shadow: 0 2px 7px rgba(0, 0, 0, .7);
}
.item { display: flex; width: 100%; height: 20px; align-items: center; padding: 0 6px 0 9px; }
.slot { width: 20px; }
.lbl { flex: 1; text-align: left; }
.item u { text-underline-offset: 2px; text-decoration-color: #aaa; }
.item.active-item { background: linear-gradient(#7ba2e4, #5680c2); color: #000; }
.popup hr { margin: 4px 0; border: 0; border-top: 1px solid #444; }

/* Work area */
.work { flex: 1; min-height: 0; display: grid; grid-template-columns: minmax(0, 1fr) 64px; }
.left { display: flex; flex-direction: column; min-height: 0; }
.view3d { position: relative; flex: 1; min-height: 0; overflow: hidden; background: #393939; box-shadow: inset 1px 0 #5a5a5a; }
.scene { width: 100%; height: 100%; shape-rendering: crispEdges; }
.scene path, .scene circle { vector-effect: non-scaling-stroke; }
.wire path, .wire circle, path.wire { fill: none; stroke: #000; stroke-width: 1; }
.wire .w2 { stroke-width: 2; }
.wire .w3 { stroke-width: 3; }
.dotted circle { stroke-dasharray: 2 3; stroke-width: 1; }
.rel path { fill: none; stroke: #14148c; stroke-dasharray: 3 3; }
.active path { fill: none; stroke: #ffa940; stroke-width: 2; }
.zaxis { stroke: #0000dc; } .zhead { fill: #0000dc; }
.yaxis { stroke: #00dc00; } .yhead { fill: #00dc00; }
.cur-w { fill: none; stroke: #fff; stroke-width: 1; }
.cur-r { fill: none; stroke: #f00; stroke-dasharray: 6 5; }
.overlay { position: absolute; left: 20px; top: 10px; color: #fff; }
.tab { position: absolute; top: 23px; width: 13px; height: 13px; background: #2a2a2a; color: #808080; line-height: 12px; font-weight: bold; }
.tab-l { left: 0; border-radius: 0 4px 4px 0; }
.tab-r { right: 1px; border-radius: 4px 0 0 4px; }

/* Logic editor */
.logic { flex: none; height: 46px; display: flex; background: #666; overflow: hidden; }
.bricks { flex: 1; min-width: 0; border-right: 1px solid #8a8a8a; padding: 0 21px 0 4px; border-top: 1px solid #777; }
.brick-cols { position: relative; display: flex; height: 28px; padding: 7px 0 0 4px; }
.bcol { display: flex; flex-direction: column; justify-content: space-between; }
.brow { display: flex; align-items: center; height: 15px; font-size: 9px; color: #eee; }
.brow label { display: flex; align-items: center; gap: 4px; margin-left: 3px; width: 45px; }
.bc-sensors { width: 264px; margin-right: 56px; }
.bc-controllers { width: 233px; margin-right: 63px; }
.bc-actuators { width: 266px; }
.bc-controllers label:first-of-type { width: 48px; }
.bc-controllers .c2 { width: 50px; }
.bc-actuators .c2 { width: 46px; }
.drop.small { width: 72px; height: 15px; border-radius: 4px; }
.bc-controllers .small { width: 78px; }
.drop.small select { height: 13px; padding-left: 5px; line-height: 13px; }
.drop.small .ar { width: 5px; height: 11px; top: 1px; right: 2px; }
input[type="checkbox"] { position: relative; width: 12px; height: 12px; flex: none; border: 1px solid #222; border-radius: 3px; background: #484848; }
input[type="checkbox"]:checked::after { content: ""; position: absolute; left: 3px; top: -2px; width: 4px; height: 8px; border: solid #ddd; border-width: 0 2px 2px 0; rotate: 40deg; }
.stub { height: 2px; border: 1px solid #333; border-bottom: 0; border-radius: 4px 4px 0 0; }
.hscroll { height: 14px; border: 1px solid #3a3a3a; border-radius: 7px; background: linear-gradient(#959595, #7c7c7c); }
.vscroll { width: 13px; background: #555; border-radius: 7px; border: 1px solid #505050; }
.vscroll i { display: block; border-radius: 6px; background: linear-gradient(90deg, #999, #7c7c7c); border: 1px solid #444; }
.vscroll.mini { position: absolute; right: -18px; top: 4px; height: 20px; }
.vscroll.mini i { height: 12px; }
.gameprops { position: relative; width: 151px; display: flex; background: #727272; border-top: 1px solid #808080; padding: 4px 4px 0 7px; }
.gp-main { flex: 1; }
.vscroll.gp { height: 38px; margin-left: 8px; }
.vscroll.gp i { height: 17px; }
.phead { position: relative; display: flex; align-items: center; gap: 4px; height: 16px; padding-left: 5px; font-size: 12px; }
.tri { width: 8px; height: 8px; }
.dots { position: absolute; width: 10px; height: 6px; right: 3px; top: 6px; }
.addprop { display: flex; align-items: center; width: 118px; height: 20px; margin-top: 12px; padding-left: 3px; border: 1px solid #333; border-radius: 4px; background: linear-gradient(#a6a6a6, #8c8c8c); white-space: nowrap; }

/* Right column */
.right { border-left: 1px solid #000; display: flex; flex-direction: column; min-height: 0; overflow: hidden; background: #727272; }
.outliner { position: relative; flex: none; height: 360px; display: flex; flex-direction: column; border-bottom: 1px solid #000; overflow: hidden; }
.bar-side { padding: 2px 0 3px 9px; background: #727272; border-bottom: 1px solid #5c5c5c; overflow: hidden; }
.bar-side .menu { padding: 0 0 0 12px; }
.out-body { flex: 1; min-height: 0; display: flex; }
.rows { width: 46px; overflow: hidden; }
.row { display: grid; grid-template-columns: 7px 20px 19px; height: 20px; background: #7a7a7a; }
.row:nth-child(even) { background: #727272; }
.row i { display: flex; align-items: center; justify-content: center; border-right: 1px solid #606060; overflow: hidden; }
.eye { width: 6px; height: 10px; }
.eye.off { opacity: .3; }
.ptr { width: 12px; height: 16px; }
.cam { width: 15px; height: 15px; }
.vscroll.out { height: auto; margin: 4px 0; padding-top: 17px; }
.vscroll.out i { height: 266px; }
.out-foot { flex: none; height: 17px; display: flex; padding-left: 4px; gap: 6px; }
.hmini { width: 37px; height: 13px; border-radius: 7px; background: #5c5c5c; }
.hmini i { display: block; width: 12px; height: 12px; border-radius: 50%; background: #8c8c8c; border: 1px solid #505050; }
.meshbit { width: 14px; height: 17px; }
.properties { position: relative; flex: 1; min-height: 0; overflow: hidden; }
.ctx { margin-left: 7px; border-radius: 5px 0 0 5px; border: 1px solid #222; height: 20px; }
.crumbs { display: flex; padding: 10px 0 0 2px; gap: 0; }
.crumbs .ic { margin-right: -2px; }
.crumbs .ic:last-child { margin-left: 1px; }
.datablock { width: 47px; margin: 18px 0 7px 8px; }
.datablock .seg { width: 15px; }
.datablock .seg:nth-child(2) { width: 18px; }
.datablock .seg:nth-child(3) { width: 10px; }
.panel { margin: 0 5px; padding: 4px 0 3px; border-top: 1px solid #444; box-shadow: inset 0 1px #868686; white-space: nowrap; }
.panel .phead { padding-left: 8px; margin-right: -6px; }
.panel .dots { right: 13px; }
.normals { display: grid; grid-template-columns: 14px 14px; gap: 5px 13px; padding: 14px 0 5px 6px; }
.normals input[type="checkbox"] { width: 14px; height: 14px; border-radius: 4px; }
.round { width: 20px; height: 20px; margin-left: -4px; border: 1px solid #606060; border-radius: 50%; background: radial-gradient(#777 2px, #8c8c8c 3px); }
.list { display: flex; justify-content: space-between; margin: 11px 3px 4px; }
.box { width: 26px; display: flex; align-items: flex-end; padding: 0 0 3px 1px; border: 1px solid #444; border-radius: 5px; background: #808080; overflow: hidden; }
.filt { width: 26px; height: 12px; }
.stack { width: 13px; display: flex; flex-direction: column; gap: 1px; border: 1px solid #333; border-radius: 5px; background: #333; overflow: hidden; }
.stack button { height: 19px; display: flex; align-items: center; justify-content: center; background: #8e8e8e; }
.stack .dim { background: #858585; }
.stack .dk { background: #222; }
```
